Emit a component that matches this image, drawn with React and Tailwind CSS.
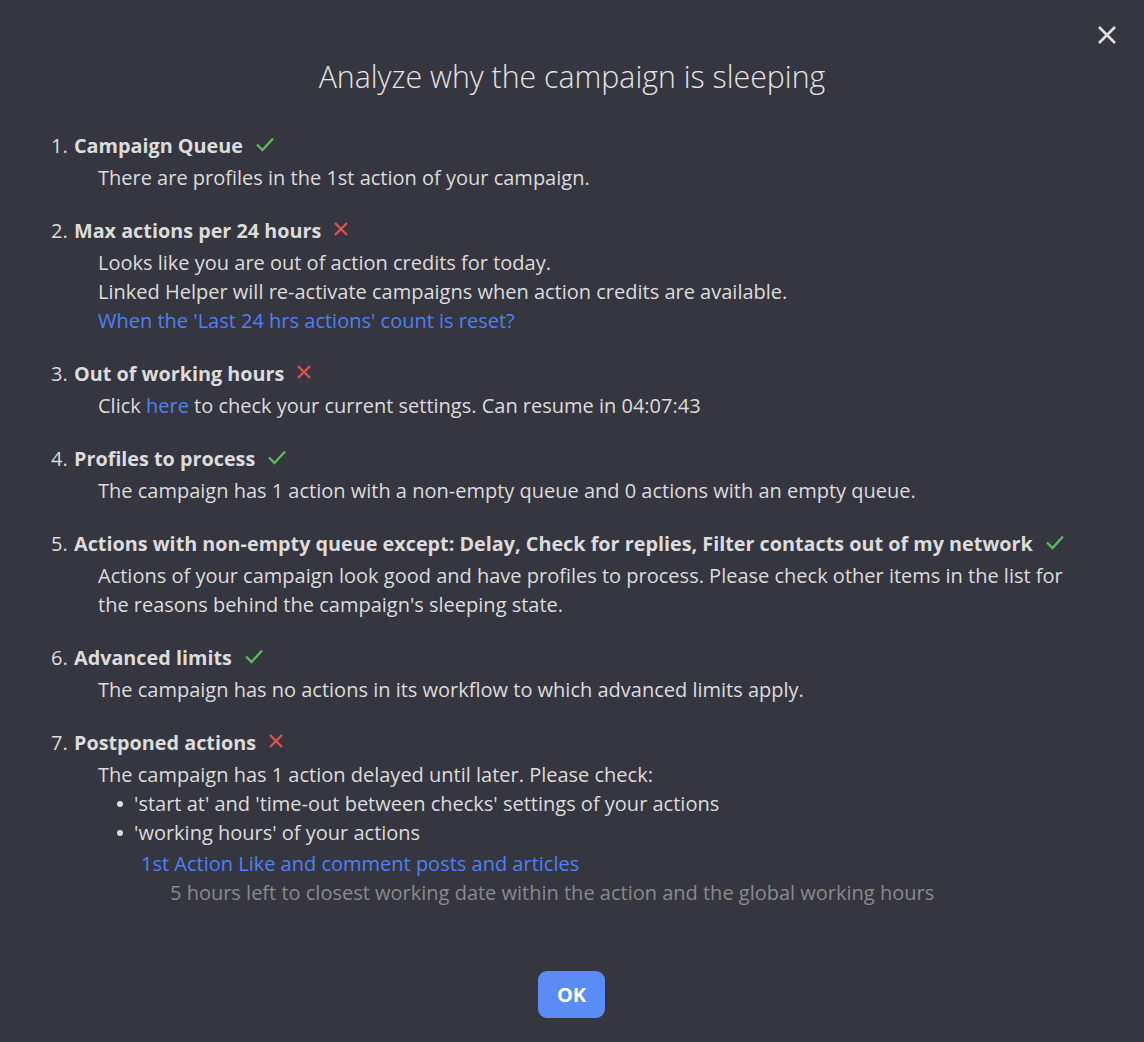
import React from "react";

const Check = () => (
  <svg width="20" height="16" viewBox="0 0 20 16" className="inline-block ml-3 -mt-1">
    <path d="M2 8.5 L7.5 14 L18 2.5" fill="none" stroke="#5cb85c" strokeWidth="2.4" />
  </svg>
);
const Cross = () => (
  <svg width="16" height="16" viewBox="0 0 16 16" className="inline-block ml-3 -mt-1">
    <path d="M2 2 L14 14 M14 2 L2 14" fill="none" stroke="#e0524d" strokeWidth="2.4" />
  </svg>
);

function Item({ n, title, ok, children }) {
  return (
    <div className="mb-[24px]">
      <div className="flex items-center h-[29px]">
        <span className="w-[23px]">{n}.</span>
        <span className="font-bold text-[19.8px]">{title}</span>
        {ok ? <Check /> : <Cross />}
      </div>
      <div className="pl-[47px] mt-[3px]">{children}</div>
    </div>
  );
}

export default function App() {
  return (
    <div
      className="w-[1144px] h-[1042px] bg-[#35363f] text-[#dcdcdc] relative text-[20px] leading-[29px]"
      style={{ fontFamily: "'Open Sans', sans-serif" }}
    >
      <button className="absolute right-[26px] top-[24px] text-[#e8e8e8]">
        <svg width="22" height="22" viewBox="0 0 22 22">
          <path d="M3 3 L19 19 M19 3 L3 19" stroke="#e0e0e0" strokeWidth="2.6" fill="none" />
        </svg>
      </button>
      <div className="pt-[58px] text-center text-[30.3px] leading-[38px] font-light text-[#e4e4e4]">
        Analyze why the campaign is sleeping
      </div>
      <div className="pl-[51px] pr-[59px] pt-[35px]">
        <Item n={1} title="Campaign Queue" ok>
          There are profiles in the 1st action of your campaign.
        </Item>
        <Item n={2} title="Max actions per 24 hours">
          <div>Looks like you are out of action credits for today.</div>
          <div>Linked Helper will re-activate campaigns when action credits are available.</div>
          <div className="text-[#4f80f5]">When the 'Last 24 hrs actions' count is reset?</div>
        </Item>
        <Item n={3} title="Out of working hours">
          Click <span className="text-[#4f80f5]">here</span> to check your current settings. Can resume in 04:07:43
        </Item>
        <Item n={4} title="Profiles to process" ok>
          The campaign has 1 action with a non-empty queue and 0 actions with an empty queue.
        </Item>
        <Item n={5} title="Actions with non-empty queue except: Delay, Check for replies, Filter contacts out of my network" ok>
          Actions of your campaign look good and have profiles to process. Please check other items in the list for the reasons behind the campaign's sleeping state.
        </Item>
        <Item n={6} title="Advanced limits" ok>
          The campaign has no actions in its workflow to which advanced limits apply.
        </Item>
        <Item n={7} title="Postponed actions">
          <div>The campaign has 1 action delayed until later. Please check:</div>
          <ul className="pl-[19px]">
            <li className="flex items-center">
              <span className="w-[6px] h-[6px] rounded-full bg-[#dcdcdc] mr-[11px]" />
              'start at' and 'time-out between checks' settings of your actions
            </li>
            <li className="flex items-center">
              <span className="w-[6px] h-[6px] rounded-full bg-[#dcdcdc] mr-[11px]" />
              'working hours' of your actions
            </li>
          </ul>
          <div className="pl-[43px] text-[#4f80f5] mt-[2px]">1st Action Like and comment posts and articles</div>
          <div className="pl-[72px] text-[#8a8a8a]">5 hours left to closest working date within the action and the global working hours</div>
        </Item>
      </div>
      <div className="absolute left-[538px] top-[971px]">
        <button className="w-[67px] h-[47px] rounded-[9px] bg-[#5b8cf5] text-white font-bold text-[20px]">
          OK
        </button>
      </div>
    </div>
  );
}
